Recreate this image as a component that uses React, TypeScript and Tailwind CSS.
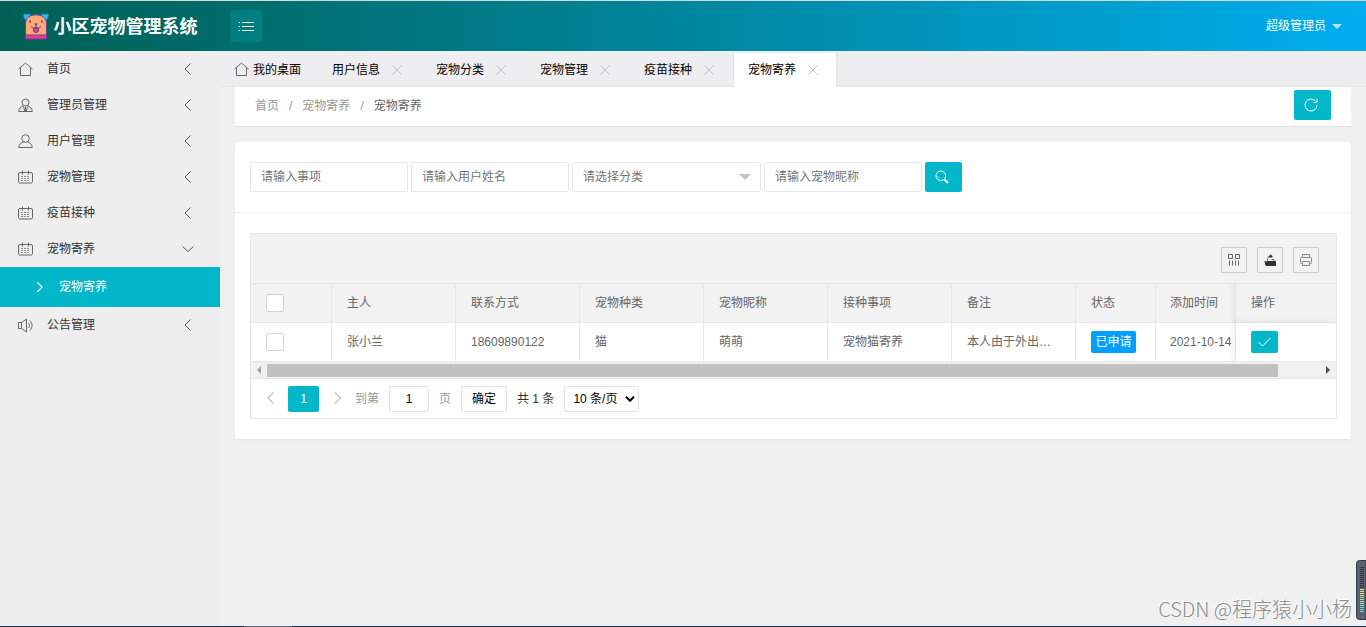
import { useState, type ReactNode } from "react";

type IconName = "home" | "admin" | "user" | "calendar" | "speaker";

interface MenuItem {
  icon: IconName;
  label: string;
  children?: string[];
}

const menu: MenuItem[] = [
  { icon: "home", label: "首页" },
  { icon: "admin", label: "管理员管理" },
  { icon: "user", label: "用户管理" },
  { icon: "calendar", label: "宠物管理" },
  { icon: "calendar", label: "疫苗接种" },
  { icon: "calendar", label: "宠物寄养", children: ["宠物寄养"] },
  { icon: "speaker", label: "公告管理" },
];

const tabs = ["用户信息", "宠物分类", "宠物管理", "疫苗接种", "宠物寄养"];

const columns = [
  { key: "owner", title: "主人", width: "w-[124px]" },
  { key: "phone", title: "联系方式", width: "w-[124px]" },
  { key: "kind", title: "宠物种类", width: "w-[124px]" },
  { key: "nickname", title: "宠物昵称", width: "w-[124px]" },
  { key: "item", title: "接种事项", width: "w-[124px]" },
  { key: "remark", title: "备注", width: "w-[124px]" },
] as const;

const rows = [
  {
    owner: "张小兰",
    phone: "18609890122",
    kind: "猫",
    nickname: "萌萌",
    item: "宠物猫寄养",
    remark: "本人由于外出…",
    status: "已申请",
    createdAt: "2021-10-14",
  },
];

const iconPaths: Record<IconName, ReactNode> = {
  home: <path d="M.5 7 7.500 1l7 6M2.500 6v7.500h10V6" />,
  admin: (
    <>
      <circle cx="7.500" cy="4.500" r="3.500" />
      <path d="M5.500 7.500C2.500 9 1 10.500.700 13.500h13.600c-.3-3-1.800-4.500-4.800-6M5.500 8.500l1.200 4.500M9.500 8.500l-1.200 4.500M7.500 9v4" />
    </>
  ),
  user: (
    <>
      <circle cx="7.500" cy="4.500" r="3.800" />
      <path d="M5.500 8C2.500 9 1 10.800.700 13.500h13.600c-.3-2.700-1.800-4.500-4.800-5.500" />
    </>
  ),
  calendar: (
    <>
      <rect x=".5" y="2.500" width="14" height="10.500" rx="1.500" />
      <path d="M4.500.5v4M10.500.5v4" />
      <path d="M3 6.500h9M3 8.500h9M3 10.500h9" strokeDasharray="2 1" strokeOpacity=".7" />
    </>
  ),
  speaker: (
    <path d="M.5 4.500h3v6h-3zM3.500 4.500l5-3.500v13l-5-3.500M10.500 5c1.300 1.500 1.300 3.500 0 5M11.800 2.500c3 3 3 7 0 10" />
  ),
};

function MenuIcon({ name }: { name: IconName }) {
  return (
    <svg
      viewBox="0 0 15 15"
      className="size-[15px] shrink-0 fill-none stroke-[#666] stroke-1"
      aria-hidden="true"
    >
      {iconPaths[name]}
    </svg>
  );
}

function Chevron({
  direction,
  className = "",
}: {
  direction: "left" | "right" | "down";
  className?: string;
}) {
  const paths = {
    left: "M9.500.5 4 6l5.500 5.500",
    right: "M4 .5 9.500 6 4 11.500",
    down: "M1.500 3.500l5.500 5 5.500-5",
  };

  return (
    <svg
      viewBox="0 0 13 13"
      className={`shrink-0 fill-none stroke-current ${className}`}
      aria-hidden="true"
    >
      <path d={paths[direction]} />
    </svg>
  );
}

function Logo() {
  return (
    <svg viewBox="0 0 26 27" className="h-[27px] w-[26px] shrink-0" aria-hidden="true">
      <path d="M.5 1 8 1.300 3.500 8C1.500 6.500.500 4 .5 1z" fill="#1fc3f8" stroke="#3f6fc4" strokeWidth=".7" />
      <path d="M25.500 1 18 1.300 22.500 8c2-1.500 3-4 3-7z" fill="#1fc3f8" stroke="#3f6fc4" strokeWidth=".7" />
      <path
        d="M2.500 25V11C2.500 5 7 1.800 13 1.800S23.500 5 23.500 11v14z"
        fill="#ffa873"
        stroke="#5b459b"
      />
      <path d="M2.500 22h21v3a1 1 0 0 1-1 1h-19a1 1 0 0 1-1-1z" fill="#f5368b" stroke="#6c3b96" />
      <circle cx="7" cy="8.500" r="1" fill="#51428f" />
      <circle cx="19" cy="8.500" r="1" fill="#51428f" />
      <path d="M11 10.500h4l-2 2z" fill="#51428f" />
      <path
        d="M13 11v3M8.500 13.500c.5 2 3.500 2.200 4.500.5 1 1.700 4 1.500 4.500-.5"
        fill="none"
        stroke="#51428f"
      />
      <path d="M10.500 15.300h5v1.700a2.500 2.500 0 0 1-5 0z" fill="#f5368b" stroke="#6c3b96" />
    </svg>
  );
}

function Header() {
  return (
    <header className="flex h-[51px] shrink-0 items-center border-t border-[#d5d9d9] bg-linear-to-r from-[#005f53] to-[#00aeef] text-white">
      <div className="flex w-[220px] shrink-0 items-center justify-center gap-[5px]">
        <Logo />
        <h1 className="pt-0.5 text-lg font-bold">小区宠物管理系统</h1>
      </div>
      <button
        type="button"
        aria-label="折叠菜单"
        className="ml-2.5 flex size-8 items-center justify-center rounded-[3px] bg-[#00989a]/40"
      >
        <svg viewBox="0 0 16 11" className="h-[11px] w-4 fill-none stroke-white" aria-hidden="true">
          <path d="M4 1.500h12M4 5.500h12M4 9.500h12M.5 1.500H2M.5 5.500H2M.5 9.500H2" />
        </svg>
      </button>
      <button type="button" className="mr-6 ml-auto flex items-center gap-1.5">
        超级管理员
        <span className="border-x-5 border-t-5 border-x-transparent border-t-white/70" />
      </button>
    </header>
  );
}

function Sidebar() {
  return (
    <nav className="w-[220px] shrink-0 bg-[#eee] text-[#333]">
      <ul>
        {menu.map((item) => (
          <li key={item.label}>
            <a href="#" className="flex h-9 items-center pr-[26px] pl-[18px]">
              <MenuIcon name={item.icon} />
              <span className="ml-3.5">{item.label}</span>
              <Chevron
                direction={item.children ? "down" : "left"}
                className="ml-auto size-[13px] text-[#555]"
              />
            </a>
            {item.children?.map((child) => (
              <a
                key={child}
                href="#"
                className="flex h-10 items-center gap-3.5 bg-[#01b7c9] pl-[34px] text-white"
              >
                <Chevron direction="right" className="size-[11px] stroke-[1.5]" />
                {child}
              </a>
            ))}
          </li>
        ))}
      </ul>
    </nav>
  );
}

function TabBar() {
  const [active, setActive] = useState("宠物寄养");

  return (
    <div className="flex h-9 shrink-0 items-end border-b border-[#e4e4e6] bg-[#eeeef0] text-black">
      <button type="button" className="flex h-[33px] w-[97px] items-center gap-1 pl-3.5">
        <MenuIcon name="home" />
        我的桌面
      </button>
      {tabs.map((tab) => (
        <div
          key={tab}
          className={`flex w-[104px] items-center gap-3 border-x pl-3.5 ${
            tab === active
              ? "-mb-px h-[34px] border-[#e4e4e6] bg-white pb-px"
              : "h-[33px] border-transparent"
          }`}
        >
          <button type="button" onClick={() => setActive(tab)}>
            {tab}
          </button>
          <button type="button" aria-label={`关闭${tab}`}>
            <svg viewBox="0 0 10 10" className="size-2.5 stroke-[#c2c2c2]" aria-hidden="true">
              <path d="M.5.5l9 9M9.500.5l-9 9" />
            </svg>
          </button>
        </div>
      ))}
    </div>
  );
}

function Breadcrumb() {
  return (
    <div className="flex h-10 items-start justify-between border-b border-[#e4e4e4] bg-white pt-[3px] pr-5 pl-5">
      <nav aria-label="路径" className="flex h-8 items-center gap-2.5 text-[#999]">
        <a href="#">首页</a>
        <span>/</span>
        <a href="#">宠物寄养</a>
        <span>/</span>
        <a href="#" className="text-[#666]">
          宠物寄养
        </a>
      </nav>
      <button
        type="button"
        aria-label="刷新"
        className="flex h-[30px] w-[37px] items-center rounded-xs bg-[#01b7c9] pl-2.5"
      >
        <svg viewBox="0 0 14 14" className="size-3.5 fill-none stroke-white" aria-hidden="true">
          <path d="M13 7.200A6 6 0 1 1 11.500 3M13 .800v3.700H9" />
        </svg>
      </button>
    </div>
  );
}

function FilterInput({ label }: { label: string }) {
  return (
    <input
      type="text"
      aria-label={label}
      placeholder={label}
      className="h-[30px] w-[158px] rounded-xs border border-[#e6e6e6] bg-white px-2.5 placeholder:text-[#757575]"
    />
  );
}

function FilterBar() {
  return (
    <form className="flex flex-wrap gap-[3px] border-b border-[#eee] px-[15px] py-5">
      <FilterInput label="请输入事项" />
      <FilterInput label="请输入用户姓名" />
      <div className="relative">
        <select
          aria-label="请选择分类"
          className="h-[30px] w-[189px] appearance-none rounded-xs border border-[#e6e6e6] bg-white px-2.5 text-[#757575]"
        >
          <option>请选择分类</option>
        </select>
        <span className="pointer-events-none absolute top-3 right-2.5 border-x-6 border-t-6 border-x-transparent border-t-[#c2c2c2]" />
      </div>
      <FilterInput label="请输入宠物昵称" />
      <button
        type="button"
        aria-label="搜索"
        className="flex h-[30px] w-[37px] items-center rounded-xs bg-[#01b7c9] pl-2.5"
      >
        <svg viewBox="0 0 14 14" className="size-3.5 fill-none stroke-white" aria-hidden="true">
          <circle cx="5.800" cy="5.800" r="4.800" />
          <path d="M3 6a3 3 0 0 0 1.500 2.300" strokeOpacity=".6" />
          <path d="M9.500 9.500l3.500 3.500" strokeWidth="2" />
        </svg>
      </button>
    </form>
  );
}

function ToolButton({ label, children }: { label: string; children: ReactNode }) {
  return (
    <button
      type="button"
      aria-label={label}
      className="flex size-[26px] items-center justify-center border border-[#ccc]"
    >
      <svg viewBox="0 0 12 12" className="size-3 fill-none stroke-[#666]" aria-hidden="true">
        {children}
      </svg>
    </button>
  );
}

function Toolbar() {
  return (
    <div className="flex h-[50px] items-center justify-end gap-2.5 border-b border-[#e6e6e6] bg-[#f2f2f2] pt-0.5 pr-[17px]">
      <ToolButton label="筛选列">
        <path d="M.5.5h4v4h-4zM7.500.5h4v4h-4z" />
        <path d="M1.500 6.500v5M4.500 6.500v5M7.500 6.500v5M10.500 6.500v5" />
      </ToolButton>
      <ToolButton label="导出">
        <path d="M1 7.500h10.500v4H2z" fill="#333" stroke="#333" />
        <path d="M.5 7.500h3M3.500 7V4.500M10 7V5.500H7.500" />
        <path d="M3.500 3.500 6.500.5l2 1.500v1.500z" fill="#333" stroke="none" />
      </ToolButton>
      <ToolButton label="打印">
        <path
          d="M2.500 3.500v-3h7v3M2.500 9.500h-1a1 1 0 0 1-1-1v-4a1 1 0 0 1 1-1h9a1 1 0 0 1 1 1v4a1 1 0 0 1-1 1h-1M2.500 7.500h7v4h-7z"
          stroke="#888"
        />
      </ToolButton>
    </div>
  );
}

const checkboxClass =
  "block size-[18px] appearance-none rounded-xs border border-[#d2d2d2] bg-white checked:bg-[#01b7c9]";
const cellClass = "h-[39px] border-r border-b border-[#e6e6e6] px-[15px] py-0";
const fixedCellClass =
  "sticky right-0 h-[39px] border-b border-l border-[#e6e6e6] px-[15px] py-0 shadow-[-1px_0_8px_rgba(0,0,0,0.08)]";

function BoardingTable() {
  return (
    <div className="overflow-hidden">
      <table className="w-full min-w-[1085px] table-fixed border-separate border-spacing-0 text-left text-[#666]">
        <thead>
          <tr className="bg-[#f2f2f2]">
            <th className={`${cellClass} w-[81px]`}>
              <input type="checkbox" aria-label="全选" className={checkboxClass} />
            </th>
            {columns.map((column) => (
              <th key={column.key} className={`${cellClass} ${column.width} font-normal`}>
                {column.title}
              </th>
            ))}
            <th className={`${cellClass} w-20 font-normal`}>状态</th>
            <th className="h-[39px] w-[79px] border-b border-[#e6e6e6] py-0 pl-3.5 font-normal whitespace-nowrap">
              添加时间
            </th>
            <th className={`${fixedCellClass} w-[101px] bg-[#f2f2f2] font-normal`}>操作</th>
          </tr>
        </thead>
        <tbody>
          {rows.map((row) => (
            <tr key={row.phone} className="bg-white">
              <td className={cellClass}>
                <input
                  type="checkbox"
                  aria-label={`选择${row.owner}`}
                  className={checkboxClass}
                />
              </td>
              {columns.map((column) => (
                <td key={column.key} className={`${cellClass} whitespace-nowrap`}>
                  {row[column.key]}
                </td>
              ))}
              <td className={cellClass}>
                <span className="flex h-[22px] w-[45px] items-center justify-center rounded-xs bg-[#01a0ff] text-white">
                  {row.status}
                </span>
              </td>
              <td className="border-b border-[#e6e6e6] py-0 pl-3.5 whitespace-nowrap">
                {row.createdAt}
              </td>
              <td className={`${fixedCellClass} bg-white`}>
                <button
                  type="button"
                  aria-label="审核"
                  className="flex h-[22px] w-[27px] items-center justify-center rounded-xs bg-[#01b7c9]"
                >
                  <svg
                    viewBox="0 0 13 10"
                    className="h-2.5 w-[13px] fill-none stroke-white"
                    aria-hidden="true"
                  >
                    <path d="M.5 5l4 4 8-8" />
                  </svg>
                </button>
              </td>
            </tr>
          ))}
        </tbody>
      </table>
    </div>
  );
}

function ScrollTrack() {
  return (
    <div className="flex h-[17px] items-center border-b border-[#e6e6e6] bg-[#f1f1f1]">
      <span className="mx-1.5 border-y-4 border-r-4 border-y-transparent border-r-[#a3a3a3]" />
      <div className="flex-1">
        <div className="h-[13px] w-[96%] bg-[#c1c1c1]" />
      </div>
      <span className="mx-1.5 border-y-4 border-l-4 border-y-transparent border-l-[#505050]" />
    </div>
  );
}

function Pagination() {
  const [page, setPage] = useState("1");

  return (
    <div className="flex h-[39px] items-center gap-2.5 pl-[11px] text-[#333]">
      <button
        type="button"
        aria-label="上一页"
        className="flex w-4 justify-center text-[#c8c8c8]"
      >
        <Chevron direction="left" className="size-[13px] stroke-[1.5]" />
      </button>
      <button type="button" className="h-[26px] w-[31px] rounded-xs bg-[#01b7c9] text-white">
        1
      </button>
      <button
        type="button"
        aria-label="下一页"
        className="flex w-4 justify-center text-[#c8c8c8]"
      >
        <Chevron direction="right" className="size-[13px] stroke-[1.5]" />
      </button>
      <label htmlFor="page" className="text-[#999]">
        到第
      </label>
      <input
        id="page"
        type="text"
        value={page}
        onChange={(e) => setPage(e.target.value)}
        className="h-[26px] w-10 rounded-xs border border-[#e2e2e2] bg-white text-center text-black"
      />
      <span className="text-[#999]">页</span>
      <button
        type="button"
        className="h-[26px] w-[46px] rounded-xs border border-[#e2e2e2] bg-white text-black"
      >
        确定
      </button>
      <span>共 1 条</span>
      <div className="relative">
        <select
          aria-label="每页条数"
          className="block h-[26px] w-[75px] appearance-none rounded-xs border border-[#e2e2e2] bg-white pl-2 text-black"
        >
          <option>10 条/页</option>
        </select>
        <svg
          viewBox="0 0 10 6"
          className="pointer-events-none absolute top-2.5 right-1 h-1.5 w-2.5 fill-none stroke-black stroke-2"
          aria-hidden="true"
        >
          <path d="M1 .800l4 4 4-4" />
        </svg>
      </div>
    </div>
  );
}

/**
 * Small volume meter docked to the right edge of the window.
 */
function VolumeMeter() {
  return (
    <svg
      viewBox="0 0 10 60"
      className="absolute right-0 bottom-[7px] h-[60px] w-2.5"
      aria-hidden="true"
    >
      <path d="M10 .5H3.500a3 3 0 0 0-3 3v53a3 3 0 0 0 3 3H10z" fill="#5a6172" stroke="#343945" />
      <g strokeWidth="4" strokeDasharray="1 1">
        <path d="M6 7v22" stroke="#30343f" />
        <path d="M6 29v8" stroke="#e3e38c" />
        <path d="M6 37v10" stroke="#a5e3a0" />
        <path d="M6 47v6" stroke="#6fdcc8" />
      </g>
    </svg>
  );
}

export default function App() {
  return (
    <div className="relative flex h-screen flex-col overflow-hidden bg-[#f0f0f0] font-['Liberation_Sans','Noto_Sans_CJK_SC',sans-serif] text-xs">
      <Header />
      <div className="flex min-h-0 flex-1">
        <Sidebar />
        <main className="flex min-w-0 flex-1 flex-col">
          <TabBar />
          <div className="px-[15px]">
            <Breadcrumb />
            <section className="mt-[15px] rounded-xs bg-white pb-5 shadow-[0_1px_2px_rgba(0,0,0,0.05)]">
              <FilterBar />
              <div className="mt-5 mr-3.5 ml-[15px] border border-[#e6e6e6]">
                <Toolbar />
                <BoardingTable />
                <ScrollTrack />
                <Pagination />
              </div>
            </section>
          </div>
        </main>
      </div>
      <div className="flex h-px shrink-0 bg-[#1b3147]">
        <span className="ml-[244px] w-12 bg-[#56657a]" />
      </div>
      <p className="absolute right-3.5 bottom-1 font-['Noto_Sans_CJK_SC',sans-serif] text-xl font-light text-[#8c8c8c] [text-shadow:-1px_-1px_0_#fff]">
        CSDN @程序猿小小杨
      </p>
      <VolumeMeter />
    </div>
  );
}
